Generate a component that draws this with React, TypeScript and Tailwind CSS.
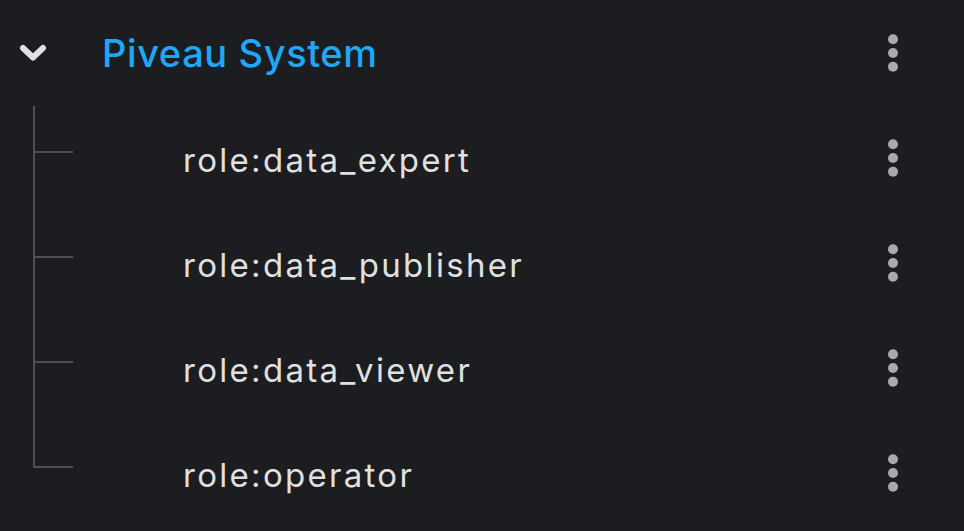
import React from "react";

const Dots = () => (
  <svg width="12" height="40" viewBox="0 0 12 40" className="block">
    <circle cx="6" cy="6.3" r="5" fill="#a9aaad" />
    <circle cx="6" cy="20" r="5" fill="#a9aaad" />
    <circle cx="6" cy="33.7" r="5" fill="#a9aaad" />
  </svg>
);

const Chevron = () => (
  <svg width="28" height="18" viewBox="0 0 28 18" className="block">
    <path d="M4 4 L14 13.5 L24 4" fill="none" stroke="#e0e0e0" strokeWidth="6" strokeLinecap="round" strokeLinejoin="round" />
  </svg>
);

const roles = ["role:data_expert", "role:data_publisher", "role:data_viewer", "role:operator"];

export default function App() {
  return (
    <div
      className="w-[964px] h-[531px] bg-[#1b1d21] overflow-hidden flex flex-col"
      style={{ fontFamily: 'Inter, "Open Sans", sans-serif' }}
    >
      <div className="h-[106px] flex items-center shrink-0">
        <div className="w-[101px] pl-[19px] flex items-center">
          <Chevron />
        </div>
        <div className="flex-1 text-[#1fa7f8] text-[38px] font-medium leading-none tracking-[0.6px] pl-[1px] pb-[1px]">Piveau System</div>
        <div className="w-[80px] flex justify-start pl-[3px]">
          <Dots />
        </div>
      </div>
      {roles.map((r, i) => {
        const last = i === roles.length - 1;
        return (
          <div key={r} className="h-[105px] flex shrink-0">
            <div className="w-[73px] flex flex-col shrink-0">
              <div className="ml-[33px] h-[47px] border-l-2 border-b-2 border-[#4d4e52]" />
              {!last && <div className="ml-[33px] flex-1 border-l-2 border-[#4d4e52]" />}
            </div>
            <div className="flex-1 flex items-center pl-[110px] pt-[3px] text-[#e0e0e0] text-[33px] leading-none tracking-[2.3px]">{r}</div>
            <div className="w-[80px] flex items-center pl-[3px] pb-[2px]">
              <Dots />
            </div>
          </div>
        );
      })}
    </div>
  );
}
